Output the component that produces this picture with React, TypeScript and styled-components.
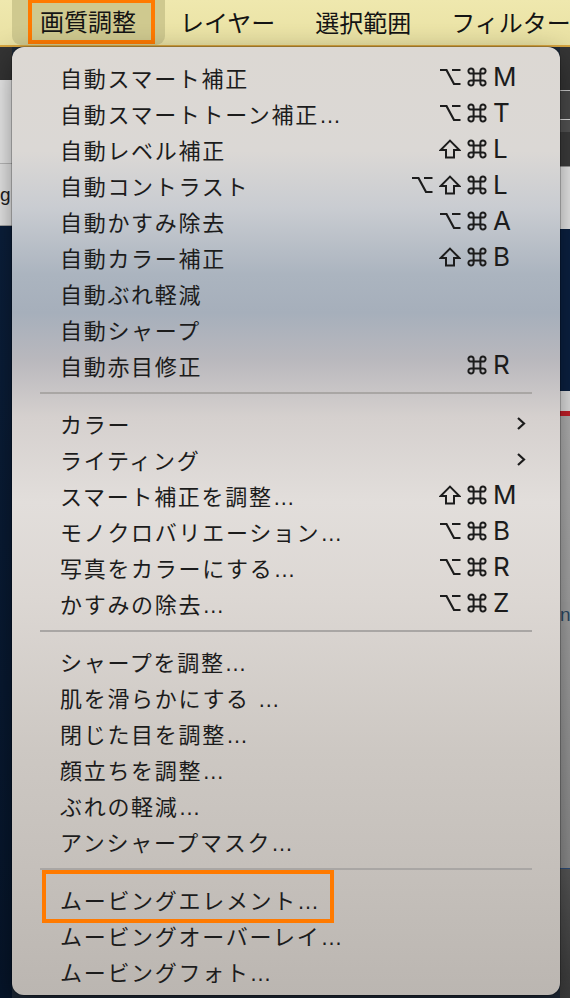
import styled, {createGlobalStyle, css} from "styled-components";
import * as React from "react";

const GlobalStyle = createGlobalStyle`
    html, body {
        margin: 0;
        padding: 0;
    }
    body {
        width: 570px;
        height: 998px;
        overflow: hidden;
        background: #1b1b1b;
        font-family: "Noto Sans CJK JP", "Noto Sans", sans-serif;
    }
`;

const Page = styled.div`
    position: relative;
    width: 570px;
    height: 998px;
    display: flex;
    flex-direction: column;
    overflow: hidden;
`;

/* ---------- top menu bar ---------- */

const MenuBar = styled.div`
    height: 45px;
    flex-shrink: 0;
    display: flex;
    align-items: stretch;
    padding-left: 12px;
    background: linear-gradient(#efe8ae, #e9e1a3);
    border-bottom: 2px solid #d8a640;
    font-family: "Noto Sans CJK JP", sans-serif;
    font-size: 24px;
    color: #141414;
    white-space: nowrap;
    overflow: hidden;
`;

const ActiveSlot = styled.div`
    display: flex;
    align-items: stretch;
    padding: 0 10px 1px 16px;
    margin-right: -5px;
    background: #cfc98f;
    border-radius: 0 0 9px 9px;
`;

const ActiveLabel = styled.div`
    display: flex;
    align-items: center;
    padding: 0 15px 2px 8px;
    border: 4px solid #ff7a00;
    border-top-width: 3px;
`;

const BarItem = styled.div`
    display: flex;
    align-items: center;
    padding: 0 20px 2px;
`;

/* ---------- app behind the menu ---------- */

const Workspace = styled.div`
    flex: 1;
    display: grid;
    grid-template-columns: 12px 1fr 10px;
    min-height: 0;
`;

const Strip = styled.div`
    display: flex;
    flex-direction: column;
    overflow: hidden;
`;

const Band = styled.div<{ $h?: number; $bg: string; $line?: string }>`
    flex: ${({$h}) => $h ? `0 0 ${$h}px` : '1'};
    background: ${({$bg}) => $bg};
    border-bottom: ${({$line}) => $line ? `1px solid ${$line}` : 'none'};
    display: flex;
    align-items: center;
    overflow: hidden;
`;

const Fragment = styled.span<{ $color?: string }>`
    font-family: "Liberation Sans", sans-serif;
    font-size: 19px;
    line-height: 1;
    color: ${({$color}) => $color ?? '#1e1e1e'};
`;

const Centre = styled.div`
    background: #1f2a38;
`;

/* ---------- dropdown ---------- */

const Menu = styled.div`
    position: absolute;
    left: 12px;
    top: 47px;
    width: 548px;
    box-sizing: border-box;
    padding: 12px 0 6px;
    border-radius: 12px;
    background: linear-gradient(180deg,
        #dcd8d3 0%, #dbd8d5 11%, #c9ccd1 17%, #abb4bf 24%, #a6afbb 28%,
        #b9b8bd 33%, #d5d0ce 39%, #e2dedb 48%, #dcd7d3 58%, #cdc8c3 74%,
        #c4bfba 88%, #bbb6b1 100%);
    box-shadow: 0 10px 30px rgba(0, 0, 0, 0.45), 0 0 0 1px rgba(0, 0, 0, 0.22);
    font-family: "Liberation Sans", "Noto Sans CJK JP", sans-serif;
    font-size: 22px;
    color: #1c1c1c;
`;

const Row = styled.div<{ $marked?: boolean }>`
    position: relative;
    height: 36px;
    display: flex;
    align-items: center;
    padding: 0 34px 0 48px;
    white-space: nowrap;

    ${({$marked}) => $marked && css`
        &::after {
            content: "";
            position: absolute;
            left: 30px;
            top: -11px;
            bottom: -6px;
            width: 292px;
            box-sizing: border-box;
            border: 4px solid #ff7a00;
        }
    `}
`;

const Label = styled.span`
    letter-spacing: 1.7px;
`;

const Separator = styled.div`
    height: 2px;
    margin: 9px 28px 11px;
    background: #a9a6a4;
`;

const Shortcut = styled.div`
    margin-left: auto;
    display: flex;
    align-items: center;
    gap: 6px;
`;

const Key = styled.span`
    width: 33px;
    font-family: Inter, "Liberation Sans", sans-serif;
    font-size: 26px;
    line-height: 1;
    color: #1c1c1c;
`;

const Chevron = styled.svg`
    margin-left: auto;
    flex-shrink: 0;
`;

const Glyph = styled.svg`
    flex-shrink: 0;
    fill: none;
    stroke: #1c1c1c;
`;

type Mod = 'opt' | 'shift';

interface Item {
    label: string;
    mods?: Mod[];
    keyChar?: string;
    sub?: boolean;
    marked?: boolean;
}

const groups: Item[][] = [
    [
        {label: '自動スマート補正', mods: ['opt'], keyChar: 'M'},
        {label: '自動スマートトーン補正…', mods: ['opt'], keyChar: 'T'},
        {label: '自動レベル補正', mods: ['shift'], keyChar: 'L'},
        {label: '自動コントラスト', mods: ['opt', 'shift'], keyChar: 'L'},
        {label: '自動かすみ除去', mods: ['opt'], keyChar: 'A'},
        {label: '自動カラー補正', mods: ['shift'], keyChar: 'B'},
        {label: '自動ぶれ軽減'},
        {label: '自動シャープ'},
        {label: '自動赤目修正', mods: [], keyChar: 'R'},
    ],
    [
        {label: 'カラー', sub: true},
        {label: 'ライティング', sub: true},
        {label: 'スマート補正を調整…', mods: ['shift'], keyChar: 'M'},
        {label: 'モノクロバリエーション…', mods: ['opt'], keyChar: 'B'},
        {label: '写真をカラーにする…', mods: ['opt'], keyChar: 'R'},
        {label: 'かすみの除去…', mods: ['opt'], keyChar: 'Z'},
    ],
    [
        {label: 'シャープを調整…'},
        {label: '肌を滑らかにする …'},
        {label: '閉じた目を調整…'},
        {label: '顔立ちを調整…'},
        {label: 'ぶれの軽減…'},
        {label: 'アンシャープマスク…'},
    ],
    [
        {label: 'ムービングエレメント…', marked: true},
        {label: 'ムービングオーバーレイ…'},
        {label: 'ムービングフォト…'},
    ],
];

const OptionIcon = () => (
    <Glyph width="22" height="18" viewBox="0 0 22 18" strokeWidth={2.2}>
        <path d="M1 2 H7.5 L15 16 H21.5 M13 2 H21.5"/>
    </Glyph>
);

const ShiftIcon = () => (
    <Glyph width="22" height="20" viewBox="0 0 22 20" strokeWidth={2} strokeLinejoin="miter">
        <path d="M11 1.6 L20.4 11 H15 V18.6 H7 V11 H1.6 Z"/>
    </Glyph>
);

const CommandIcon = () => (
    <Glyph width="20" height="20" viewBox="0 0 20 20" strokeWidth={2}>
        <path d="M6.6 6.6 V4.2 A2.6 2.6 0 1 0 4.2 6.6 H15.8 A2.6 2.6 0 1 0 13.4 4.2 V15.8 A2.6 2.6 0 1 0 15.8 13.4 H4.2 A2.6 2.6 0 1 0 6.6 15.8 Z"/>
    </Glyph>
);

const MenuRow: React.FC<{ item: Item }> = ({item}) => (
    <Row $marked={item.marked}>
        <Label>{item.label}</Label>
        {item.sub && (
            <Chevron width="10" height="15" viewBox="0 0 10 15">
                <path d="M2 2 L8 7.5 L2 13" fill="none" stroke="#1c1c1c" strokeWidth="2.2"/>
            </Chevron>
        )}
        {item.keyChar && (
            <Shortcut>
                {item.mods?.map((m, i) => m === 'opt' ? <OptionIcon key={i}/> : <ShiftIcon key={i}/>)}
                <CommandIcon/>
                <Key>{item.keyChar}</Key>
            </Shortcut>
        )}
    </Row>
);

export default function App() {
    return (
        <Page>
            <GlobalStyle/>
            <MenuBar>
                <ActiveSlot>
                    <ActiveLabel>画質調整</ActiveLabel>
                </ActiveSlot>
                <BarItem>レイヤー</BarItem>
                <BarItem>選択範囲</BarItem>
                <BarItem>フィルター</BarItem>
            </MenuBar>

            <Workspace>
                <Strip>
                    <Band $h={33} $bg="#343434"/>
                    <Band $h={83} $bg="#ececec" $line="#bcbcbc"/>
                    <Band $h={61} $bg="#e9e9e9" $line="#a8a8a8">
                        <Fragment>g</Fragment>
                    </Band>
                    <Band $bg="linear-gradient(#0b1f3b, #06152a)"/>
                </Strip>

                <Centre/>

                <Strip>
                    <Band $h={43} $bg="#363636" $line="#cfcfcf"/>
                    <Band $h={28} $bg="#4a4a4a" $line="#e4e4e4"/>
                    <Band $h={12} $bg="#555555"/>
                    <Band $h={34} $bg="#3d3d3d" $line="#9a9a9a"/>
                    <Band $h={62} $bg="#ededed"/>
                    <Band $h={162} $bg="#0b2142"/>
                    <Band $h={20} $bg="#e4e4e4"/>
                    <Band $h={5} $bg="#c8202a"/>
                    <Band $h={186} $bg="linear-gradient(#b4b4b4, #a6a6a6)"/>
                    <Band $h={24} $bg="#a5a5a5">
                        <Fragment $color="#2b4a66">n</Fragment>
                    </Band>
                    <Band $h={242} $bg="linear-gradient(#a4a4a4, #8e8e8e)" $line="#2e4f7d"/>
                    <Band $bg="linear-gradient(#585858, #3c3c3c)"/>
                </Strip>
            </Workspace>

            <Menu>
                {groups.map((group, gi) => (
                    <React.Fragment key={gi}>
                        {gi > 0 && <Separator/>}
                        {group.map((item) => <MenuRow key={item.label} item={item}/>)}
                    </React.Fragment>
                ))}
            </Menu>
        </Page>
    );
}
